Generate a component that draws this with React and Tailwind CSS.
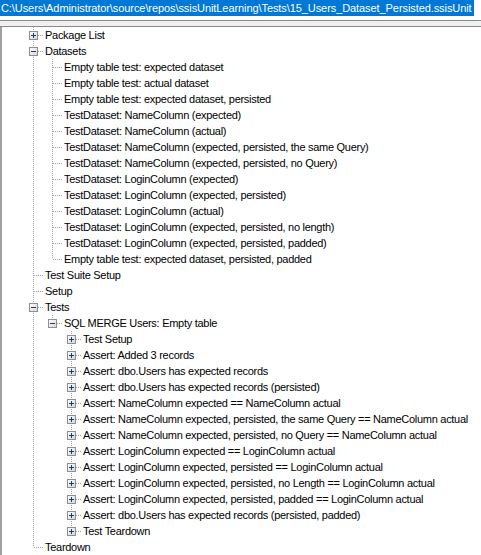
import React from "react";

const tree = [
  { label: "Package List", collapsed: true },
  {
    label: "Datasets",
    children: [
      "Empty table test: expected dataset",
      "Empty table test: actual dataset",
      "Empty table test: expected dataset, persisted",
      "TestDataset: NameColumn (expected)",
      "TestDataset: NameColumn (actual)",
      "TestDataset: NameColumn (expected, persisted, the same Query)",
      "TestDataset: NameColumn (expected, persisted, no Query)",
      "TestDataset: LoginColumn (expected)",
      "TestDataset: LoginColumn (expected, persisted)",
      "TestDataset: LoginColumn (actual)",
      "TestDataset: LoginColumn (expected, persisted, no length)",
      "TestDataset: LoginColumn (expected, persisted, padded)",
      "Empty table test: expected dataset, persisted, padded",
    ].map((l) => ({ label: l })),
  },
  { label: "Test Suite Setup" },
  { label: "Setup" },
  {
    label: "Tests",
    children: [
      {
        label: "SQL MERGE Users: Empty table",
        children: [
          "Test Setup",
          "Assert: Added 3 records",
          "Assert: dbo.Users has expected records",
          "Assert: dbo.Users has expected records (persisted)",
          "Assert: NameColumn expected == NameColumn actual",
          "Assert: NameColumn expected, persisted, the same Query == NameColumn actual",
          "Assert: NameColumn expected, persisted, no Query == NameColumn actual",
          "Assert: LoginColumn expected == LoginColumn actual",
          "Assert: LoginColumn expected, persisted == LoginColumn actual",
          "Assert: LoginColumn expected, persisted, no Length == LoginColumn actual",
          "Assert: LoginColumn expected, persisted, padded == LoginColumn actual",
          "Assert: dbo.Users has expected records (persisted, padded)",
          "Test Teardown",
        ].map((l) => ({ label: l, collapsed: true })),
      },
    ],
  },
  { label: "Teardown" },
];

function flatten(nodes, depth, ancestors, out) {
  nodes.forEach((n, i) => {
    const last = i === nodes.length - 1;
    out.push({
      label: n.label,
      depth,
      ancestors,
      last,
      box: n.children ? "minus" : n.collapsed ? "plus" : null,
    });
    if (n.children) flatten(n.children, depth + 1, [...ancestors, !last], out);
  });
  return out;
}

const rows = flatten(tree, 0, [], []);
const LINE = "#a0a0a0";

function Cell({ vertical, own, last, box }) {
  return (
    <svg width="19" height="16" className="shrink-0 block" shapeRendering="crispEdges">
      {vertical && (
        <line x1="9.5" y1="0" x2="9.5" y2="16" stroke={LINE} strokeDasharray="1 1" />
      )}
      {own && (
        <>
          <line x1="9.5" y1="0" x2="9.5" y2={last ? 8 : 16} stroke={LINE} strokeDasharray="1 1" />
          <line x1="10" y1="8.5" x2="19" y2="8.5" stroke={LINE} strokeDasharray="1 1" />
        </>
      )}
      {box && (
        <>
          <defs>
            <linearGradient id="bx" x1="0" y1="0" x2="1" y2="1">
              <stop offset="0" stopColor="#ffffff" />
              <stop offset="1" stopColor="#d4d4d4" />
            </linearGradient>
          </defs>
          <rect x="5.5" y="4.5" width="8" height="8" fill="url(#bx)" stroke="#8f8f8f" />
          <rect x="7" y="8" width="5" height="1" fill="#1f3a6e" />
          {box === "plus" && <rect x="9" y="6" width="1" height="5" fill="#1f3a6e" />}
        </>
      )}
    </svg>
  );
}

export default function App() {
  return (
    <div
      className="w-[481px] h-[555px] bg-white overflow-hidden flex flex-col text-[11px] text-black"
      style={{ fontFamily: '"Liberation Sans", Arial, sans-serif' }}
    >
      <div className="h-[20px] bg-white shrink-0 flex items-start">
        <span className="bg-[#0078d7] text-white h-[16px] leading-[16px] pl-px pr-[2px] whitespace-nowrap tracking-[-0.08px]">
          C:\Users\Administrator\source\repos\ssisUnitLearning\Tests\15_Users_Dataset_Persisted.ssisUnit
        </span>
      </div>
      <div className="h-px bg-[#8a8a8a] shrink-0" />
      <div className="h-[5px] bg-[#f0f0f0] shrink-0" />
      <div className="h-px bg-[#8a8a8a] shrink-0" />
      <div className="flex-1 border-l-2 border-[#a0a0a0] pl-[22px] flex flex-col tracking-[-0.28px]">
        {rows.map((r, i) => (
          <div key={i} className="flex h-[16px] items-center whitespace-nowrap">
            {r.ancestors.map((a, j) => (
              <Cell key={j} vertical={a} />
            ))}
            <Cell own last={r.last} box={r.box} />
            <span className="ml-[2px] leading-[16px]">{r.label}</span>
          </div>
        ))}
      </div>
    </div>
  );
}
